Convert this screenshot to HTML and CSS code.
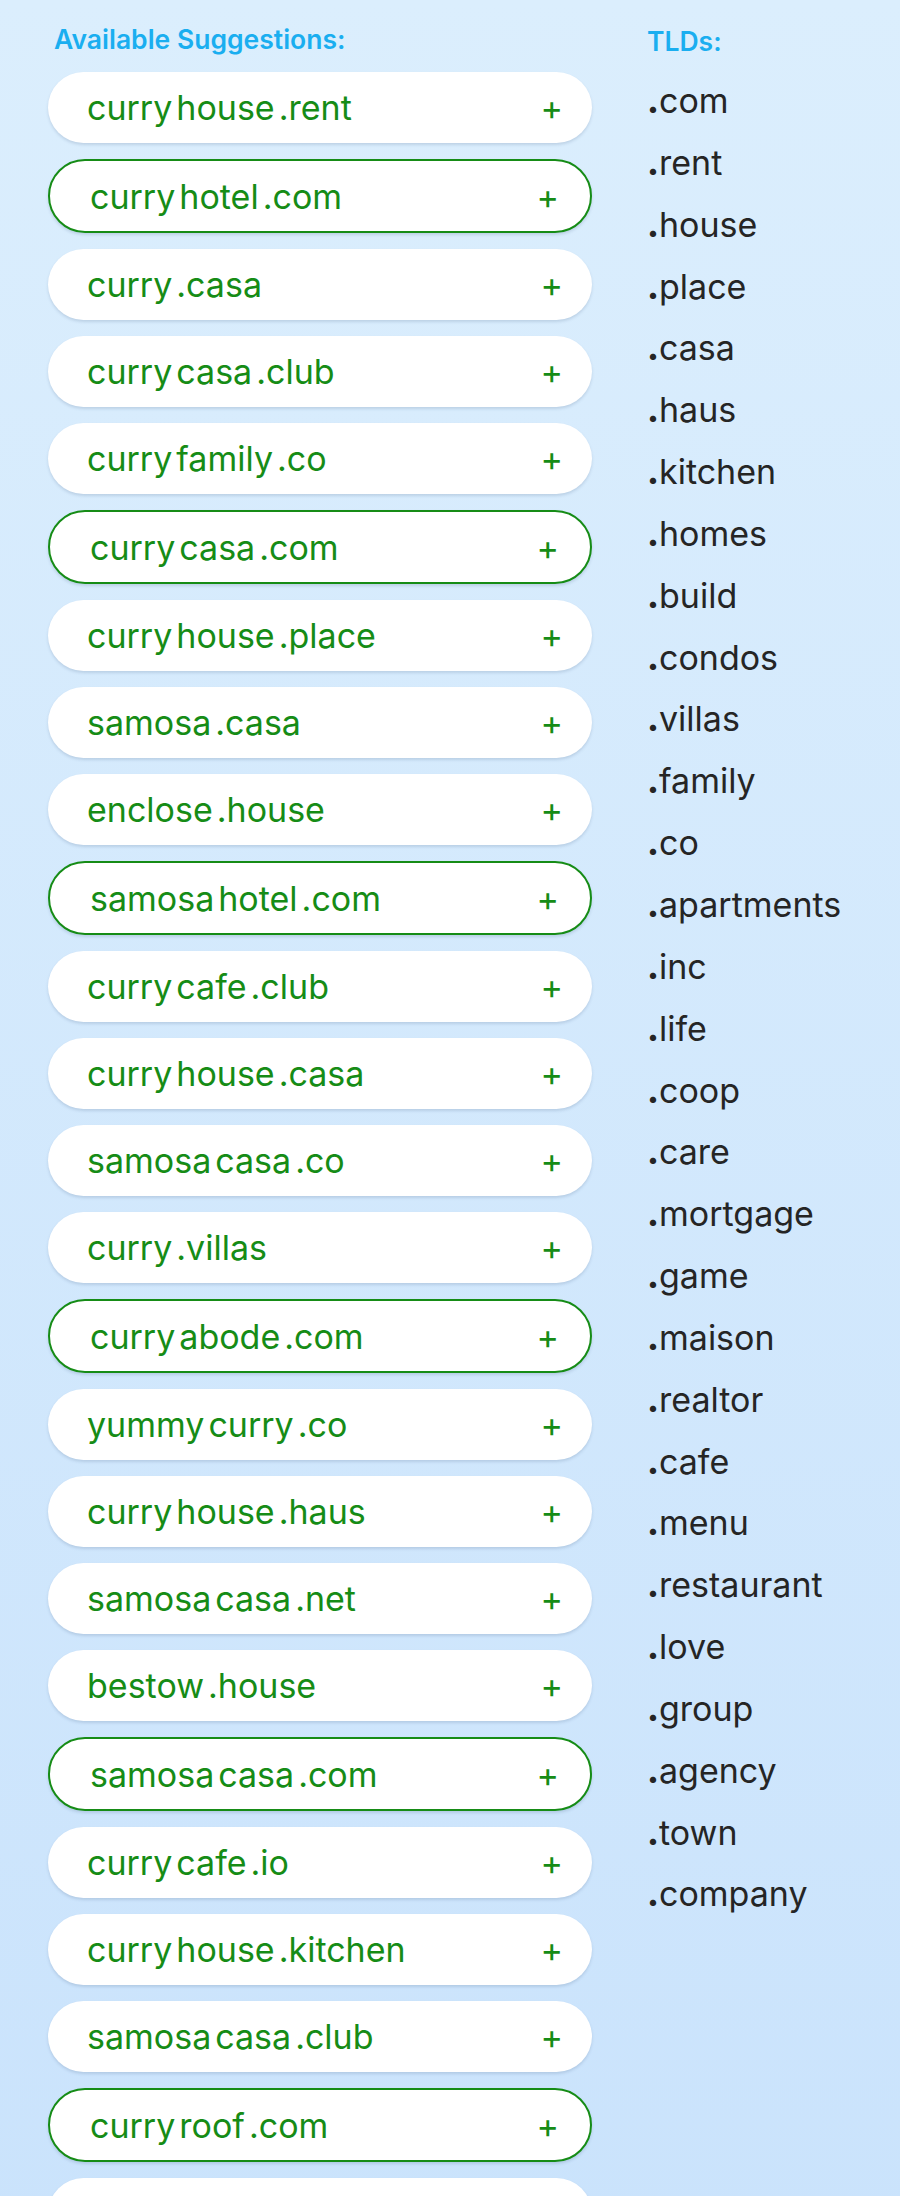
FILE: index.html
```html
<!DOCTYPE html>
<html lang="en">
<head>
<meta charset="utf-8">
<title>Domain Suggestions</title>
<link rel="stylesheet" href="styles.css">
</head>
<body>
<main class="page">
  <section class="suggestions">
    <h2 class="label label-left">Available Suggestions:</h2>
    <ul class="pills">
      <li class="pill"><span class="name"><span>curry</span><span>house</span><span>.rent</span></span><span class="add">+</span></li>
      <li class="pill sel"><span class="name"><span>curry</span><span>hotel</span><span>.com</span></span><span class="add">+</span></li>
      <li class="pill"><span class="name"><span>curry</span><span>.casa</span></span><span class="add">+</span></li>
      <li class="pill"><span class="name"><span>curry</span><span>casa</span><span>.club</span></span><span class="add">+</span></li>
      <li class="pill"><span class="name"><span>curry</span><span>family</span><span>.co</span></span><span class="add">+</span></li>
      <li class="pill sel"><span class="name"><span>curry</span><span>casa</span><span>.com</span></span><span class="add">+</span></li>
      <li class="pill"><span class="name"><span>curry</span><span>house</span><span>.place</span></span><span class="add">+</span></li>
      <li class="pill"><span class="name"><span>samosa</span><span>.casa</span></span><span class="add">+</span></li>
      <li class="pill"><span class="name"><span>enclose</span><span>.house</span></span><span class="add">+</span></li>
      <li class="pill sel"><span class="name"><span>samosa</span><span>hotel</span><span>.com</span></span><span class="add">+</span></li>
      <li class="pill"><span class="name"><span>curry</span><span>cafe</span><span>.club</span></span><span class="add">+</span></li>
      <li class="pill"><span class="name"><span>curry</span><span>house</span><span>.casa</span></span><span class="add">+</span></li>
      <li class="pill"><span class="name"><span>samosa</span><span>casa</span><span>.co</span></span><span class="add">+</span></li>
      <li class="pill"><span class="name"><span>curry</span><span>.villas</span></span><span class="add">+</span></li>
      <li class="pill sel"><span class="name"><span>curry</span><span>abode</span><span>.com</span></span><span class="add">+</span></li>
      <li class="pill"><span class="name"><span>yummy</span><span>curry</span><span>.co</span></span><span class="add">+</span></li>
      <li class="pill"><span class="name"><span>curry</span><span>house</span><span>.haus</span></span><span class="add">+</span></li>
      <li class="pill"><span class="name"><span>samosa</span><span>casa</span><span>.net</span></span><span class="add">+</span></li>
      <li class="pill"><span class="name"><span>bestow</span><span>.house</span></span><span class="add">+</span></li>
      <li class="pill sel"><span class="name"><span>samosa</span><span>casa</span><span>.com</span></span><span class="add">+</span></li>
      <li class="pill"><span class="name"><span>curry</span><span>cafe</span><span>.io</span></span><span class="add">+</span></li>
      <li class="pill"><span class="name"><span>curry</span><span>house</span><span>.kitchen</span></span><span class="add">+</span></li>
      <li class="pill"><span class="name"><span>samosa</span><span>casa</span><span>.club</span></span><span class="add">+</span></li>
      <li class="pill sel"><span class="name"><span>curry</span><span>roof</span><span>.com</span></span><span class="add">+</span></li>
      <li class="pill"></li>
    </ul>
  </section>
  <section class="tlds">
    <h2 class="label label-right">TLDs:</h2>
    <ul class="tld-list">
      <li><b>.</b>com</li>
      <li><b>.</b>rent</li>
      <li><b>.</b>house</li>
      <li><b>.</b>place</li>
      <li><b>.</b>casa</li>
      <li><b>.</b>haus</li>
      <li><b>.</b>kitchen</li>
      <li><b>.</b>homes</li>
      <li><b>.</b>build</li>
      <li><b>.</b>condos</li>
      <li><b>.</b>villas</li>
      <li><b>.</b>family</li>
      <li><b>.</b>co</li>
      <li><b>.</b>apartments</li>
      <li><b>.</b>inc</li>
      <li><b>.</b>life</li>
      <li><b>.</b>coop</li>
      <li><b>.</b>care</li>
      <li><b>.</b>mortgage</li>
      <li><b>.</b>game</li>
      <li><b>.</b>maison</li>
      <li><b>.</b>realtor</li>
      <li><b>.</b>cafe</li>
      <li><b>.</b>menu</li>
      <li><b>.</b>restaurant</li>
      <li><b>.</b>love</li>
      <li><b>.</b>group</li>
      <li><b>.</b>agency</li>
      <li><b>.</b>town</li>
      <li><b>.</b>company</li>
    </ul>
  </section>
</main>
</body>
</html>
```

FILE: styles.css
```css
html, body {
  margin: 0;
  padding: 0;
}

body {
  min-height: 2196px;
  background: linear-gradient(180deg, #dbeefd 0%, #cae3fc 100%);
  font-family: Inter, "Noto Sans", "Liberation Sans", sans-serif;
  overflow: hidden;
}

.page {
  display: flex;
  align-items: flex-start;
  padding-left: 48px;
  gap: 55px;
}

.suggestions {
  width: 544px;
  flex: none;
}

.tlds {
  flex: 1;
}

.label {
  margin: 0;
  font-size: 26.5px;
  line-height: 32px;
  font-weight: 600;
  color: #1aaef0;
}

.label-left {
  padding-left: 6px;
  margin-top: 23px;
  margin-bottom: 17px;
}

.label-right {
  margin-top: 25px;
  margin-bottom: 13px;
}

.pills {
  list-style: none;
  margin: 0;
  padding: 0;
  display: flex;
  flex-direction: column;
  gap: 16px;
}

.pill {
  box-sizing: border-box;
  height: 71px;
  display: flex;
  align-items: center;
  justify-content: space-between;
  padding: 0 29px 0 39px;
  background: #ffffff;
  border-radius: 37px;
  box-shadow: 0 2px 3px rgba(60, 90, 130, 0.18);
  color: #168c16;
  font-size: 34px;
}

.pill.sel {
  height: 74px;
  border: 2px solid #168c16;
  padding: 0 31px 0 40px;
}

.name {
  display: flex;
  gap: 4px;
}

.add {
  font-size: 34px;
}

.tld-list {
  list-style: none;
  margin: 0;
  padding: 0;
}

.tld-list li {
  height: 61.85px;
  line-height: 61.85px;
  font-size: 34px;
  color: #252525;
}

.tld-list b {
  font-weight: 800;
}
```
